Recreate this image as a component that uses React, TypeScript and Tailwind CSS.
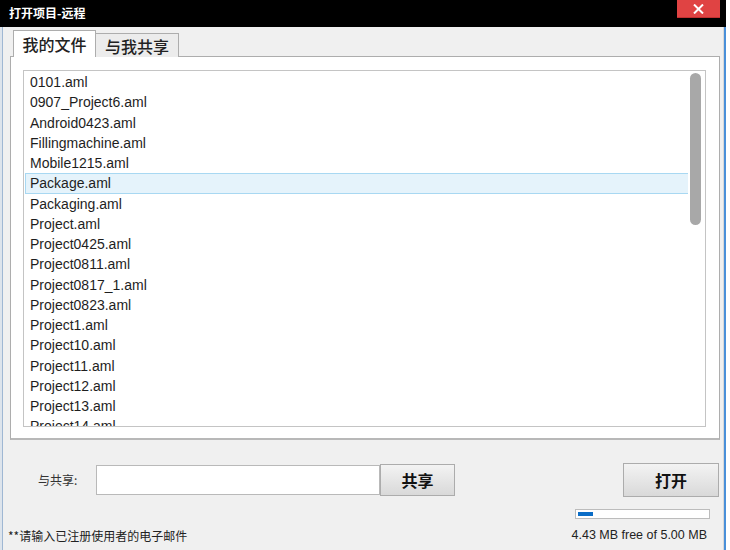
import React, { useState } from 'react';

const FILES = [
  '0101.aml',
  '0907_Project6.aml',
  'Android0423.aml',
  'Fillingmachine.aml',
  'Mobile1215.aml',
  'Package.aml',
  'Packaging.aml',
  'Project.aml',
  'Project0425.aml',
  'Project0811.aml',
  'Project0817_1.aml',
  'Project0823.aml',
  'Project1.aml',
  'Project10.aml',
  'Project11.aml',
  'Project12.aml',
  'Project13.aml',
  'Project14.aml',
];

const cjk = "font-['Noto_Sans_CJK_SC','Noto_Sans',sans-serif]";
const latin = "font-['Liberation_Sans',Arial,sans-serif]";

const App: React.FC = () => {
  const [tab, setTab] = useState(0);
  const [selected, setSelected] = useState('Package.aml');
  const [email, setEmail] = useState('');

  return (
    <div className="w-[730px] h-[550px] overflow-hidden bg-white flex flex-col">
      {/* Title bar */}
      <div className="w-[726px] h-[27px] shrink-0 bg-black flex justify-between">
        <span className={`${cjk} text-white text-[12px] font-bold leading-none mt-[7px] ml-[9px]`}>
          打开项目-远程
        </span>
        <button className="w-[43px] h-[18px] bg-[#e04343] border-b border-[#c03030] mr-[6px] flex items-center justify-center">
          <svg width="11" height="10" viewBox="0 0 11 10">
            <path d="M1 0.5 L10 9.5 M10 0.5 L1 9.5" stroke="white" strokeWidth="2" />
          </svg>
        </button>
      </div>

      <div className="flex flex-1">
        {/* background strip on the left */}
        <div className="w-[3px] bg-[#dde4ec] border-r border-[#9fb7d3]" />

        {/* Dialog body */}
        <div className="w-[721px] bg-[#f0f0f0] border-r border-[#d8d8d8] flex flex-col">
          {/* Tabs */}
          <div className="flex items-end ml-[10px] mt-[3px] h-[27px] relative z-10">
            <button
              onClick={() => setTab(0)}
              className={`${cjk} w-[83px] text-[16px] font-medium text-[#222] border border-b-0 border-[#adadad] flex items-center justify-center ${
                tab === 0 ? 'bg-white h-[27px]' : 'bg-[#ececec] h-[24px]'
              }`}
            >
              我的文件
            </button>
            <button
              onClick={() => setTab(1)}
              className={`${cjk} w-[83px] text-[16px] font-medium text-[#222] border border-l-0 border-b-0 border-[#adadad] flex items-center justify-center ${
                tab === 1 ? 'bg-white h-[27px]' : 'bg-[#ececec] h-[24px]'
              }`}
            >
              与我共享
            </button>
          </div>

          {/* Tab panel */}
          <div className="ml-[7px] -mt-px w-[710px] h-[384px] bg-white border border-[#adadad] border-b-2 border-b-[#b8b8b8] pt-[13px] pl-[12px]">
            <div className="w-[683px] h-[357px] border border-[#c4c4c4] flex overflow-hidden">
              <div className="flex-1 pt-px pl-px overflow-hidden">
                {FILES.map((f) => (
                  <div
                    key={f}
                    onClick={() => setSelected(f)}
                    className={`${latin} h-[20.25px] w-[664px] pl-[4px] text-[14px] leading-[18px] text-[#1e1e1e] border whitespace-nowrap ${
                      selected === f ? 'bg-[#e5f3fb] border-[#a8d8f2]' : 'border-transparent'
                    }`}
                  >
                    {f}
                  </div>
                ))}
              </div>
              <div className="w-[17px] pt-[2px] flex justify-center pr-[2px]">
                <div className="w-[11px] h-[152px] rounded-full bg-[#a8a8a8]" />
              </div>
            </div>
          </div>

          {/* Share row */}
          <div className="flex items-center mt-[23px] h-[34px]">
            <span className={`${cjk} text-[12px] text-[#333] ml-[35px] w-[58px]`}>与共享:</span>
            <input
              value={email}
              onChange={(e) => setEmail(e.target.value)}
              className="w-[284px] h-[30px] bg-white border border-[#b9b9b9] outline-none px-1 text-[13px]"
            />
            <button className={`${cjk} w-[75px] h-[32px] border border-[#acacac] bg-gradient-to-b from-[#f3f3f3] to-[#d9d9d9] text-[16px] font-bold text-[#111]`}>
              共享
            </button>
            <button className={`${cjk} ml-auto mr-[4px] w-[96px] h-[34px] border border-[#acacac] bg-gradient-to-b from-[#f3f3f3] to-[#d9d9d9] text-[16px] font-bold text-[#111]`}>
              打开
            </button>
          </div>

          {/* Footer */}
          <div className="flex justify-between items-end mt-[12px]">
            <span className={`${cjk} text-[12px] text-[#222] ml-[5px] leading-none`}>
              **请输入已注册使用者的电子邮件
            </span>
            <div className="flex flex-col items-end mr-[13px]">
              <div className="w-[135px] h-[10px] bg-white border border-[#bcbcbc] p-[2px]">
                <div className="w-[15px] h-full bg-[#0b6dc7]" />
              </div>
              <span className={`${latin} text-[12.5px] text-[#222] mt-[10px] mr-[3px] leading-none`}>
                4.43 MB free of 5.00 MB
              </span>
            </div>
          </div>
        </div>

        {/* background strip on the right */}
        <div className="flex-1 bg-white border-l-2 border-[#4a90d9]" />
      </div>
    </div>
  );
};

export default App;
